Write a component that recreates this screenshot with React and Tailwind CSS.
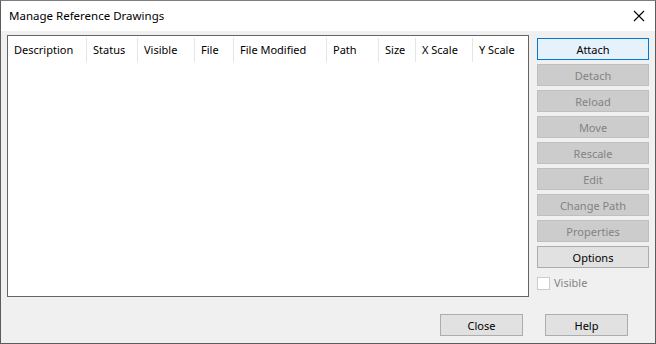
import React from 'react';

const columns = [
    { label: 'Description', w: 'w-[79px]' },
    { label: 'Status', w: 'w-[51px]' },
    { label: 'Visible', w: 'w-[57px]' },
    { label: 'File', w: 'w-[39px]' },
    { label: 'File Modified', w: 'w-[93px]' },
    { label: 'Path', w: 'w-[52px]' },
    { label: 'Size', w: 'w-[37px]' },
    { label: 'X Scale', w: 'w-[57px]' },
    { label: 'Y Scale', w: 'w-[55px]' }
];

const actions = [
    { label: 'Attach', kind: 'default' },
    { label: 'Detach', kind: 'disabled' },
    { label: 'Reload', kind: 'disabled' },
    { label: 'Move', kind: 'disabled' },
    { label: 'Rescale', kind: 'disabled' },
    { label: 'Edit', kind: 'disabled' },
    { label: 'Change Path', kind: 'disabled' },
    { label: 'Properties', kind: 'disabled' },
    { label: 'Options', kind: 'normal' }
];

const buttonStyles = {
    default: 'bg-[#e5f1fb] border-[#0078d7] text-black',
    disabled: 'bg-[#cccccc] border-[#bfbfbf] text-[#838383]',
    normal: 'bg-[#e1e1e1] border-[#adadad] text-black'
};

const Button = ({ label, kind = 'normal', className = '' }) => (
    <button
        className={`h-[22px] border flex items-center justify-center leading-none ${buttonStyles[kind]} ${className}`}
    >
        {label}
    </button>
);

export default function App() {
    return (
        <div className="w-[656px] h-[344px] flex flex-col border border-[#5c5c5c] border-t-[#7d7d7d] bg-[#f0f0f0] text-[11px] font-['Noto_Sans',sans-serif] text-black select-none">
            {/* title bar */}
            <div className="h-[30px] bg-white flex items-center justify-between pl-[8px] pr-[10px]">
                <span className="text-[11.5px]">Manage Reference Drawings</span>
                <svg width="12" height="12" viewBox="0 0 12 12" className="mt-[-1px]">
                    <path d="M1 1 L11 11 M11 1 L1 11" stroke="#000" strokeWidth="1.1" fill="none" />
                </svg>
            </div>

            <div className="flex-1 flex flex-col pl-[6px]">
                <div className="flex pt-[4px]">
                    {/* list view */}
                    <div className="w-[522px] h-[262px] bg-white border border-[#646464]">
                        <div className="flex h-[27px] items-center">
                            {columns.map(col => (
                                <div
                                    key={col.label}
                                    className={`${col.w} h-[24px] flex items-center pl-[6px] pt-[1px] border-r border-[#e5e5e5] last:border-r-0 whitespace-nowrap`}
                                >
                                    {col.label}
                                </div>
                            ))}
                        </div>
                    </div>

                    {/* action buttons */}
                    <div className="ml-[8px] pt-[3px] w-[112px] flex flex-col gap-[4px]">
                        {actions.map(a => (
                            <Button key={a.label} label={a.label} kind={a.kind} />
                        ))}
                        <label className="flex items-center gap-[4px] mt-[5px] h-[13px] text-[#838383]">
                            <span className="w-[13px] h-[13px] bg-white border border-[#cccccc]" />
                            Visible
                        </label>
                    </div>
                </div>

                <div className="flex justify-end mt-[17px] pr-[27px] gap-[22px]">
                    <Button label="Close" className="w-[83px]" />
                    <Button label="Help" className="w-[83px]" />
                </div>
            </div>
        </div>
    );
}
